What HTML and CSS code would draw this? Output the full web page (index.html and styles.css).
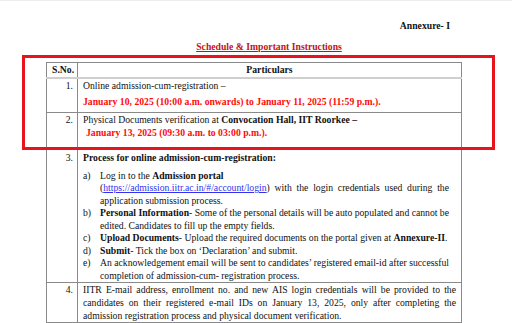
FILE: index.html
```html
<!DOCTYPE html>
<html>
<head>
<meta charset="utf-8">
<link rel="stylesheet" href="styles.css">
</head>
<body>
<div class="page">
  <div class="annex">Annexure- I</div>
  <div class="title"><span>Schedule &amp; Important Instructions</span></div>
  <div class="table-wrap">
    <table class="sched">
      <colgroup><col class="c-no"><col class="c-part"></colgroup>
      <tr class="head">
        <th>S.No.</th>
        <th>Particulars</th>
      </tr>
      <tr class="r1">
        <td class="no">1.</td>
        <td>
          <p>Online admission-cum-registration –</p>
          <p class="red gap3">January 10, 2025 (10:00 a.m. onwards) to January 11, 2025 (11:59 p.m.).</p>
        </td>
      </tr>
      <tr class="r2">
        <td class="no">2.</td>
        <td>
          <p>Physical Documents verification at <b>Convocation Hall, IIT Roorkee –</b></p>
          <p class="red indent">January 13, 2025 (09:30 a.m. to 03:00 p.m.).</p>
        </td>
      </tr>
      <tr class="r3">
        <td class="no">3.</td>
        <td>
          <p class="strong">Process for online admission-cum-registration:</p>
          <ol class="steps">
            <li><span class="mk">a)</span><span class="tx"><span class="ln">Log in to the <b>Admission portal</b></span><span class="ln jl">(<a class="link">https://admission.iitr.ac.in/#/account/login</a>) with the login credentials used during the</span><span class="ln">application submission process.</span></span></li>
            <li><span class="mk">b)</span><span class="tx"><span class="ln jl"><b>Personal Information</b>- Some of the personal details will be auto populated and cannot be</span><span class="ln">edited. Candidates to fill up the empty fields.</span></span></li>
            <li><span class="mk">c)</span><span class="tx"><span class="ln"><b>Upload Documents</b>- Upload the required documents on the portal given at <b>Annexure-II</b>.</span></span></li>
            <li><span class="mk">d)</span><span class="tx"><span class="ln"><b>Submit</b>- Tick the box on ‘Declaration’ and submit.</span></span></li>
            <li><span class="mk">e)</span><span class="tx"><span class="ln jl">An acknowledgement email will be sent to candidates’ registered email-id after successful</span><span class="ln">completion of admission-cum- registration process.</span></span></li>
          </ol>
        </td>
      </tr>
      <tr class="r4">
        <td class="no">4.</td>
        <td>
          <p class="para">
            <span class="ln jl">IITR E-mail address, enrollment no. and new AIS login credentials will be provided to the</span>
            <span class="ln jl">candidates on their registered e-mail IDs on January 13, 2025, only after completing the</span>
            <span class="ln">admission registration process and physical document verification.</span>
          </p>
        </td>
      </tr>
    </table>
    <div class="highlight"></div>
  </div>
</div>
</body>
</html>
```
FILE: styles.css
```css
* { box-sizing: border-box; }
html, body { margin: 0; padding: 0; background: #ffffff; }
body {
  font-family: "Liberation Serif", "Times New Roman", serif;
  font-size: 9.7px;
  color: #111111;
}
.page {
  width: 512px;
  height: 323px;
  overflow: hidden;
  padding-top: 18px;
  border-top: 1px solid #eeeeee;
}
.annex {
  font-weight: bold;
  line-height: 13px;
  text-align: right;
  padding-right: 62px;
}
.title {
  margin-top: 8px;
  line-height: 13px;
  text-align: center;
  padding-left: 26px;
  font-weight: bold;
  color: #c01418;
}
.title span { text-decoration: underline; }
.table-wrap {
  position: relative;
  margin-top: 9px;
  margin-left: 46px;
  width: 416px;
}
.sched {
  width: 416px;
  border-collapse: collapse;
  border: 1px solid #8a8a8a;
  table-layout: fixed;
}
.c-no { width: 31px; }
.sched th, .sched td {
  border: 1px solid #8a8a8a;
  vertical-align: top;
  padding: 0 5px 0 5px;
  line-height: 13px;
}
.sched th {
  height: 15px;
  padding-top: 0;
  font-weight: bold;
  text-align: center;
  border-bottom: 2px solid #cfcfcf;
}
.sched td.no {
  text-align: right;
  padding-right: 4px;
  padding-left: 2px;
}
.sched p { margin: 0; }
.red { color: #ff0a0a; font-weight: bold; }
.gap3 { margin-top: 3px !important; }
.indent { padding-left: 3px; }
.r1 td { padding-top: 0; padding-bottom: 4px; }
.r2 td { padding-top: 0; padding-bottom: 10px; }
.r3 td { padding-top: 1px; padding-bottom: 0; }
.r4 td { padding-top: 0; padding-bottom: 0; height: 39px; }
.strong { font-weight: bold; }
.steps {
  list-style: none;
  margin: 6px 7px 0 0;
  padding: 0;
  line-height: 12.5px;
}
.steps li { display: flex; }
.steps .mk { flex: 0 0 17px; }
.steps .tx { flex: 1; min-width: 0; }
.ln { display: block; white-space: nowrap; }
.jl {
  text-align: justify;
  text-align-last: justify;
  word-spacing: -0.6px;
}
.link { color: #3333ee; text-decoration: underline; }
.highlight {
  position: absolute;
  left: -24px;
  top: -7px;
  width: 473px;
  height: 95px;
  border: 3px solid #e8141c;
  pointer-events: none;
}
```
